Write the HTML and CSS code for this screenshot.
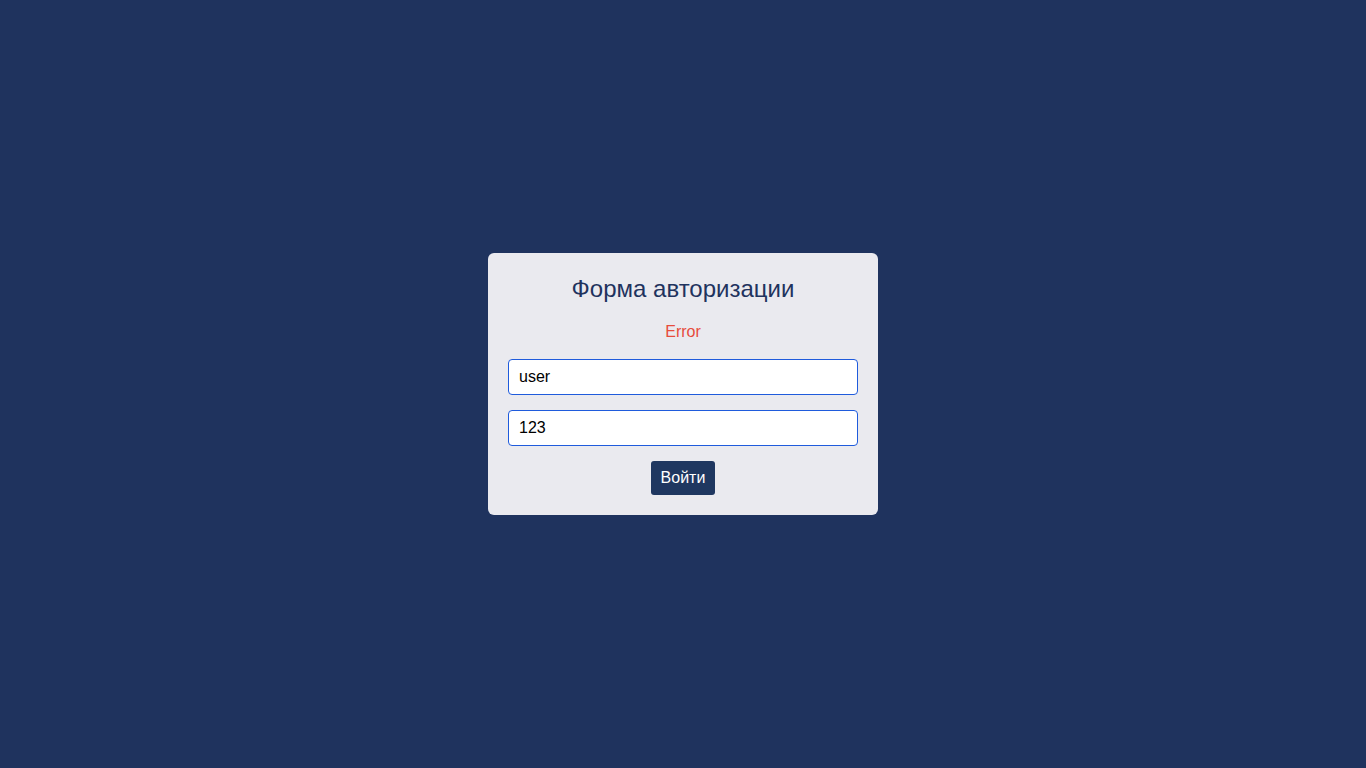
FILE: index.html
```html
<!DOCTYPE html>
<html lang="ru">
<head>
<meta charset="utf-8">
<title>Форма авторизации</title>
<link rel="stylesheet" href="styles.css">
</head>
<body>
<main class="page">
  <form class="card">
    <h2 class="title">Форма авторизации</h2>
    <p class="error">Error</p>
    <input class="field" type="text" value="user">
    <input class="field" type="text" value="123">
    <button class="btn" type="button">Войти</button>
  </form>
</main>
</body>
</html>
```
FILE: styles.css
```css
html, body {
  margin: 0;
  padding: 0;
  height: 100%;
}
body {
  background: #1f335e;
  font-family: "Liberation Sans", Arial, sans-serif;
}
.page {
  height: 768px;
  display: flex;
  align-items: center;
  justify-content: center;
}
.card {
  width: 390px;
  box-sizing: border-box;
  padding: 22px 20px 20px;
  background: #eaeaef;
  border-radius: 6px;
  display: flex;
  flex-direction: column;
  align-items: center;
}
.title {
  margin: 0 0 20px;
  font-size: 24px;
  font-weight: normal;
  line-height: 28px;
  color: #1f335e;
}
.error {
  margin: 0 0 18px;
  font-size: 16px;
  line-height: 18px;
  color: #e74c3c;
}
.field {
  width: 100%;
  box-sizing: border-box;
  height: 36px;
  padding: 8px 10px;
  margin: 0 0 15px;
  border: 1px solid #1f5bdc;
  border-radius: 4px;
  background: #fff;
  font-family: "Liberation Sans", Arial, sans-serif;
  font-size: 16px;
  color: #000;
  outline: none;
}
.btn {
  height: 34px;
  padding: 0 10px;
  border: none;
  border-radius: 3px;
  background: #1f3760;
  color: #fff;
  font-family: "Liberation Sans", Arial, sans-serif;
  font-size: 16px;
  cursor: pointer;
}
```
